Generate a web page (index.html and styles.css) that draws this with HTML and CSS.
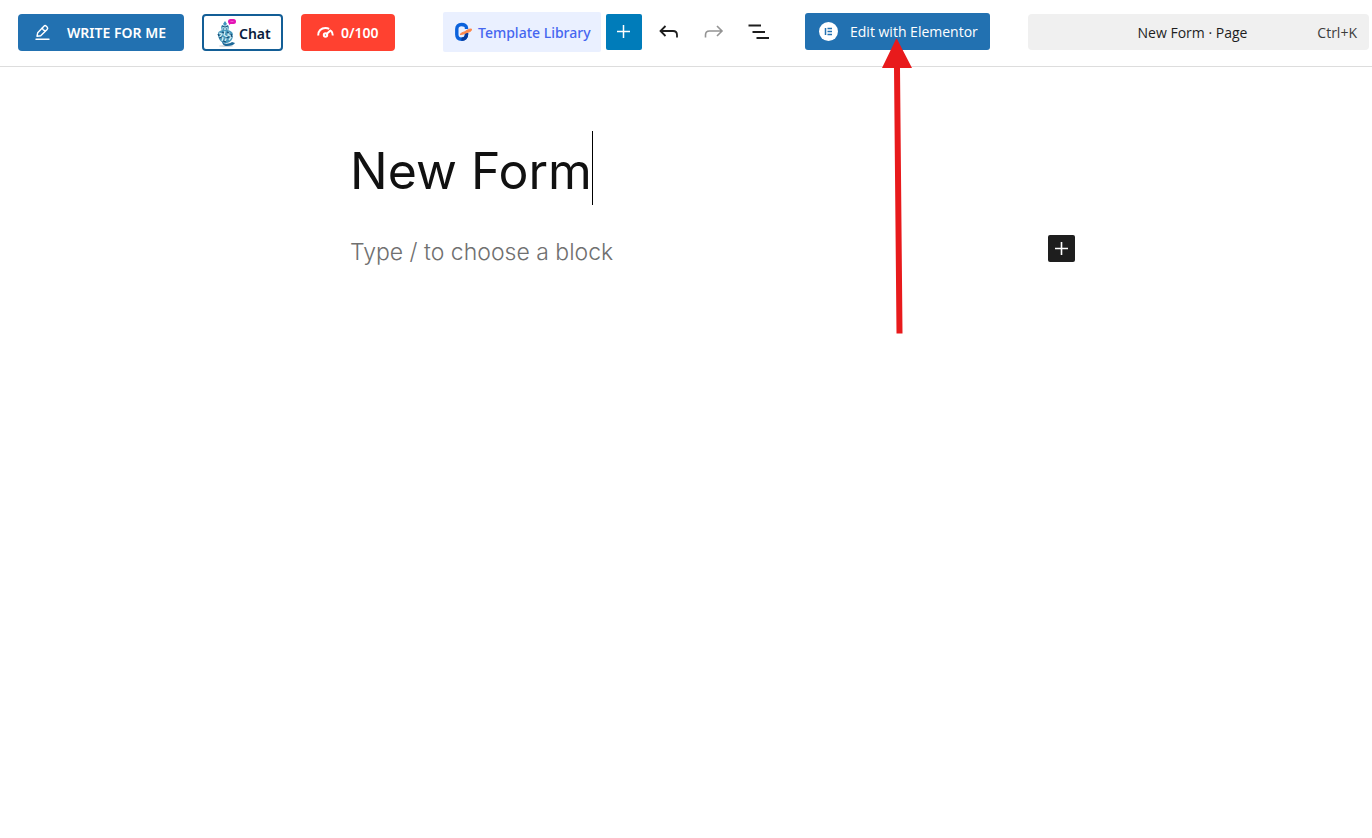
FILE: index.html
```html
<!DOCTYPE html>
<html lang="en">
<head>
<meta charset="utf-8">
<meta name="viewport" content="width=device-width, initial-scale=1">
<title>New Form</title>
<link rel="stylesheet" href="styles.css">
</head>
<body>
<header class="topbar">
  <div class="assist">
    <button class="btn btn-write" type="button">
      <svg width="17" height="17" viewBox="0 0 17 17" fill="none" stroke="currentColor" stroke-width="1.4" stroke-linejoin="round" stroke-linecap="round" aria-hidden="true"><path d="M3 12.200l.7-3.400 6.200-6.600a1.700 1.700 0 0 1 2.400 0l.8.8a1.700 1.700 0 0 1 0 2.400l-6.400 6.400z"/><path d="M8.400 4c.2 1.600 1.200 2.600 2.800 2.800M2 15.300h13"/></svg>
      <span>WRITE FOR ME</span>
    </button>
    <button class="btn btn-chat" type="button">
      <svg width="22" height="29" viewBox="0 0 22 29" aria-hidden="true">
        <ellipse cx="9" cy="27" rx="7" ry="1" fill="#d5dade"/>
        <path d="M8 2l2 3-2 2-2-2z" fill="#3f93bd"/>
        <path d="M4 8l1-2 3 1 3-1 1 2-1 5H5z" fill="#4f9fc4"/>
        <circle cx="8" cy="9.500" r="2.800" fill="#a5d3e3"/>
        <path d="M5 7l3 1 3-1M6 10h1m2 0h1" stroke="#225b80" stroke-width="1" fill="none"/>
        <path d="M1 15c0-3 3-4 7-4s8 1 8 5-2 7-6 8H7c-4-1-6-5-6-9z" fill="#499abd"/>
        <path d="M2 14l3 1-2 3 3 1-1 3M8 12l-1 4 3 2-2 4M12 13l-1 3 4 1-3 4" stroke="#d4edf3" stroke-width="1.300" fill="none"/>
        <path d="M5 13l2 1m3-1l2 1M2 19l3-1m4 1l3-1M6 22l3 1M1 15l1 2m12-2l1 3" stroke="#174d76" stroke-width="1.300"/>
        <path d="M5 22c2 4 7 3 10 1l3 1c-1 2-4 3-8 3-3 0-5-2-5-5z" fill="#1c6899"/>
        <rect x="11" y="0" width="8" height="5" rx="2.500" fill="#e414b5"/>
        <path d="M12 4v2l3-2z" fill="#e414b5"/>
        <path d="M13.500 2.500h3" stroke="#ee55d0" stroke-width="1"/>
      </svg>
      <span>Chat</span>
    </button>
    <button class="btn btn-score" type="button" aria-label="Score 0/100">
      <svg width="17" height="12" viewBox="0 0 17 12" fill="none" stroke="currentColor" stroke-width="2" aria-hidden="true"><path d="M1.200 9.500C1 5 4.200 2 8.500 2c1.500 0 2.600.3 3.700.9M14 4.800c1.200 1.300 1.800 2.900 1.800 4.700"/><path d="M9 8.500l5-4.500"/><circle cx="8.500" cy="9" r="1.700"/></svg>
      <span>0/100</span>
    </button>
  </div>

  <div class="tools">
    <button class="btn-library" type="button">
      <svg width="19" height="20" viewBox="0 0 19 20" fill="none" aria-hidden="true">
        <path d="M12.500 7V6c0-2.500-2-3.500-5-3.500S2.800 4.500 2.800 7v5.500c0 3 1.700 4.700 4.700 4.700s5-1.700 5-4.700V11" stroke="#0b62dc" stroke-width="3.400"/>
        <path d="M7.500 17.200c3 0 5-1.700 5-4.700V11" stroke="#083b9c" stroke-width="3.400"/>
        <path d="M6 12.500c2-2.500 4-2 6-3.500s3-2 5.500-2c0 2-1 2.700-3.500 3.200s-3.500 2.300-8 2.300z" fill="#ff874b" stroke="#ff874b"/>
      </svg>
      <span>Template Library</span>
    </button>
    <button class="btn-insert" type="button" aria-label="Add block">
      <svg width="16" height="16" viewBox="0 0 16 16" stroke="currentColor" stroke-width="1.500" aria-hidden="true"><path d="M7.500 1v13M1 7.500h13"/></svg>
    </button>
    <div class="history">
      <button class="icon-btn" type="button" aria-label="Undo">
        <svg width="24" height="24" viewBox="0 0 24 24" fill="none" stroke="currentColor" stroke-width="1.800" aria-hidden="true"><path d="M8.500 6l-5 5 5 5M3.500 11H16c2.800 0 4 1.300 4 4v2.500"/></svg>
      </button>
      <button class="icon-btn" type="button" aria-label="Redo" disabled>
        <svg width="24" height="24" viewBox="0 0 24 24" fill="none" stroke="currentColor" stroke-width="1.600" aria-hidden="true"><path d="M15 6l5 5-5 5M20 11H7.500c-2.800 0-4 1.300-4 4v2.500"/></svg>
      </button>
      <button class="icon-btn" type="button" aria-label="Document overview">
        <svg width="24" height="24" viewBox="0 0 24 24" stroke="currentColor" stroke-width="1.800" aria-hidden="true"><path d="M1.500 5.500H14M5.500 12H18M9.500 18H22"/></svg>
      </button>
    </div>
  </div>

  <div class="elementor">
    <button class="btn btn-elementor" type="button">
      <svg width="19" height="19" viewBox="0 0 19 19" aria-hidden="true"><circle cx="9.500" cy="9.500" r="9.500" fill="#fff"/><path d="M6.500 6v7" stroke="#2271b1" stroke-width="1.500"/><path d="M8.500 6.500H13M8.500 9.500H13M8.500 12.500H13" stroke="#2271b1" stroke-width="1.300"/></svg>
      <span>Edit with Elementor</span>
    </button>
    <svg class="pointer" width="32" height="297" viewBox="0 0 32 297" fill="#e81a1c" aria-hidden="true"><path d="M15.500 0L31 30H19l2.500 265.500h-6L13 30H1z"/></svg>
  </div>

  <button class="command" type="button">
    <span class="command-title">New Form · Page</span>
    <span class="command-key">Ctrl+K</span>
  </button>
</header>

<main class="canvas">
  <div class="title-row">
    <h1 class="title" contenteditable="true" spellcheck="false">New Form</h1>
    <span class="caret"></span>
  </div>
  <div class="block-row">
    <input class="block-input" type="text" placeholder="Type / to choose a block" aria-label="Block content">
    <button class="block-add" type="button" aria-label="Add block">
      <svg width="15" height="15" viewBox="0 0 15 15" stroke="currentColor" stroke-width="1.600" aria-hidden="true"><path d="M7.500 1v13M1 7.500h13"/></svg>
    </button>
  </div>
</main>
</body>
</html>
```
FILE: styles.css
```css
* {
  box-sizing: border-box;
}

body {
  min-height: 100vh;
  margin: 0;
  background: #fff;
  color: #1e1e1e;
  font-family: "Noto Sans", "Open Sans", sans-serif;
  font-size: 14px;
}

button {
  display: flex;
  align-items: center;
  margin: 0;
  padding: 0;
  border: 0;
  background: none;
  color: inherit;
  font: inherit;
  white-space: nowrap;
  cursor: pointer;
}

svg {
  display: block;
  flex: none;
}

.topbar {
  display: flex;
  align-items: center;
  height: 67px;
  padding: 0 3px 2px 18px;
  border-bottom: 1px solid #ddd;
}

.assist {
  display: flex;
  gap: 18px;
  margin-right: 48px;
}

.btn {
  height: 37px;
  border-radius: 4px;
  color: #fff;
}

.btn-write {
  width: 166px;
  padding-left: 16px;
  gap: 16px;
  background: #2271b1;
  font-weight: 600;
}

.btn-chat {
  width: 81px;
  padding: 2px 0 0 13px;
  border: 2px solid #135e96;
  background: #fff;
  color: #0a1b3d;
  font-weight: 600;
}

.btn-score {
  width: 94px;
  padding-left: 16px;
  gap: 7px;
  background: #ff4130;
  font-weight: 600;
}

.tools {
  display: flex;
  align-items: center;
  gap: 5px;
  margin-right: 28px;
}

.btn-library {
  width: 158px;
  height: 40px;
  padding-left: 11px;
  gap: 5px;
  border-radius: 2px;
  background: #eaf0ff;
  color: #4566f0;
  font-weight: 500;
}

.btn-insert {
  justify-content: center;
  width: 36px;
  height: 36px;
  border-radius: 2px;
  background: #007cba;
  color: #fff;
}

.history {
  display: flex;
  gap: 9px;
  margin-left: 4px;
}

.icon-btn {
  justify-content: center;
  width: 36px;
  height: 36px;
}

.icon-btn:disabled {
  color: #949494;
}

.elementor {
  position: relative;
  margin: 0 38px 2px 0;
}

.btn-elementor {
  width: 185px;
  padding-left: 14px;
  gap: 12px;
  border-radius: 3px;
  background: #2271b1;
  font-family: "Open Sans", sans-serif;
}

.pointer {
  position: absolute;
  top: 25px;
  left: 76px;
  pointer-events: none;
}

.command {
  display: grid;
  grid-template-columns: 1fr auto 1fr;
  flex: 1;
  height: 36px;
  padding-right: 12px;
  border-radius: 4px;
  background: #f0f0f0;
  font-family: "Open Sans", sans-serif;
}

.command-title {
  grid-column: 2;
}

.command-key {
  justify-self: end;
  color: #3c3c3c;
}

.canvas {
  width: 100%;
  max-width: 778px;
  min-height: calc(100vh - 67px);
  margin: 0 auto;
  padding: 64px 0 0 53px;
}

.title-row {
  display: flex;
}

.title {
  margin: 0;
  padding-top: 6px;
  outline: 0;
  color: #111;
  font-family: Inter, sans-serif;
  font-size: 50px;
  font-weight: 400;
  line-height: 68px;
}

.caret {
  width: 1px;
  background: #000;
}

.block-row {
  display: flex;
  align-items: center;
  margin-top: 23px;
}

.block-input {
  flex: 1;
  min-width: 0;
  height: 40px;
  padding: 8px 0 0;
  border: 0;
  outline: 0;
  background: none;
  font-family: Inter, sans-serif;
  font-size: 23px;
  font-weight: 300;
}

.block-input::placeholder {
  color: #707070;
  opacity: 1;
}

.block-add {
  justify-content: center;
  width: 27px;
  height: 27px;
  border-radius: 2px;
  background: #1e1e1e;
  color: #fff;
}
```
